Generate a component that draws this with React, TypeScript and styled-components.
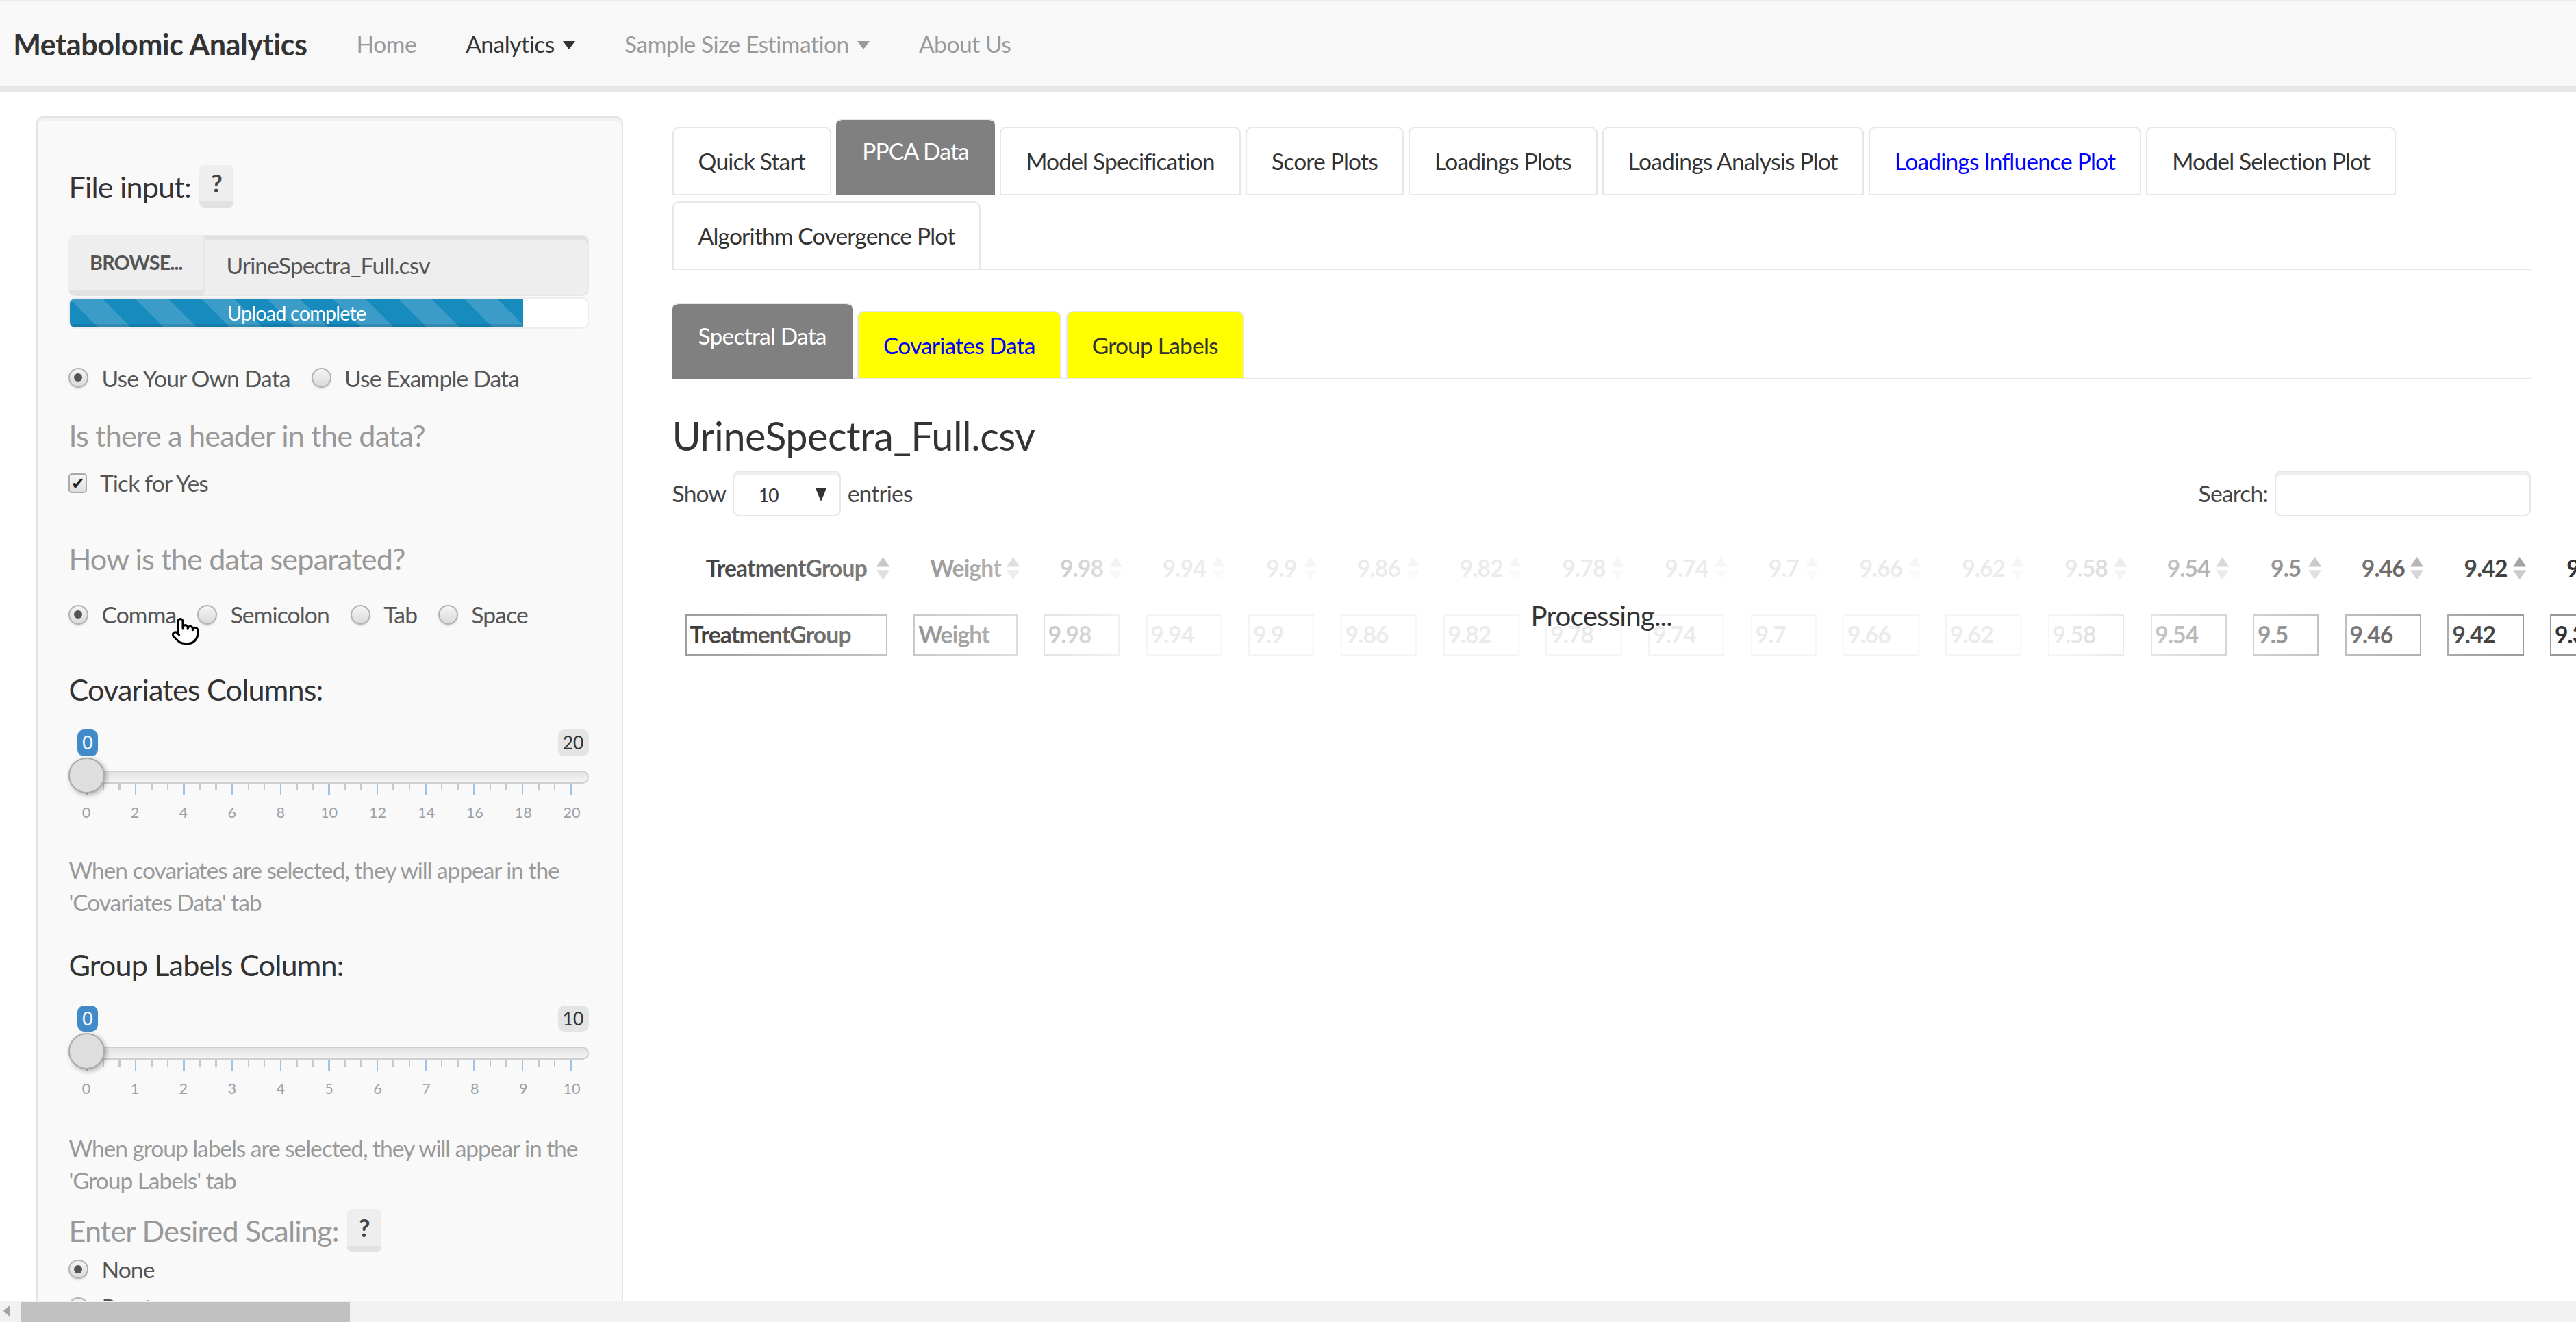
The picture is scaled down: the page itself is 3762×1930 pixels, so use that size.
import React from "react";
import styled, { createGlobalStyle, css } from "styled-components";
import { Pointer } from "lucide-react";

const FONT = `"Source Sans Pro", Lato, "Open Sans", sans-serif`;

const Global = createGlobalStyle`
  html { zoom: 2.4; }
  html, body { margin: 0; padding: 0; overflow: hidden; background: #fff; }
  body { font-family: ${FONT}; font-size: 14px; color: #555; letter-spacing: -0.35px; }
  * { box-sizing: border-box; }
`;

/* ---------- Navbar ---------- */
const Navbar = styled.nav`
  height: 56px;
  background: #f8f8f8;
  border-top: 1px solid #ececf0;
  border-bottom: 4px solid #e6e6e6;
  display: flex;
  align-items: center;
  padding-left: 8px;
  letter-spacing: -0.2px;
`;
const Brand = styled.span`
  font-size: 18px;
  font-weight: 700;
  color: #333;
  margin-right: 15px;
`;
const NavLink = styled.span<{ $active?: boolean }>`
  padding: 0 15px;
  font-size: 14px;
  color: ${(p) => (p.$active ? "#333" : "#999")};
  display: inline-flex;
  align-items: center;
  gap: 5px;
`;
const Caret = styled.span`
  width: 0;
  height: 0;
  border-left: 4px solid transparent;
  border-right: 4px solid transparent;
  border-top: 5px solid currentColor;
  margin-top: 2px;
`;

/* ---------- Layout ---------- */
const Body = styled.div`
  display: flex;
  align-items: flex-start;
  gap: 30px;
  padding: 15px 0 0 22px;
`;
const Well = styled.aside`
  flex: none;
  width: 357px;
  min-height: 1000px;
  background: #f9f9f9;
  border: 1px solid #e3e3e3;
  border-radius: 4px;
  box-shadow: inset 0 2px 0 rgba(0, 0, 0, 0.03);
  padding: 28px 20px 20px 19px;
`;
const Main = styled.main`
  flex: none;
  width: 1131px;
  padding-top: 1px;
`;

/* ---------- Sidebar parts ---------- */
const LabelRow = styled.div<{ $mt?: number }>`
  display: flex;
  align-items: center;
  height: 27px;
  margin-top: ${(p) => p.$mt ?? 0}px;
`;
const FieldLabel = styled.div<{ $muted?: boolean; $mt?: number }>`
  font-size: 18px;
  line-height: 26px;
  color: ${(p) => (p.$muted ? "#999" : "#333")};
  margin-top: ${(p) => p.$mt ?? 0}px;
`;
const HelpButton = styled.span`
  display: inline-flex;
  align-items: center;
  justify-content: center;
  width: 21px;
  height: 26px;
  margin-left: 5px;
  background: #eee;
  border-bottom: 4px solid #e2e2e2;
  border-radius: 3px;
  font-weight: 700;
  font-size: 15px;
  color: #444;
`;
const FileGroup = styled.div`
  display: flex;
  height: 37px;
  margin-top: 16px;
`;
const BrowseButton = styled.div`
  width: 82px;
  flex: none;
  display: flex;
  align-items: center;
  justify-content: center;
  background: #eee;
  border-bottom: 4px solid #e2e2e2;
  border-radius: 4px 0 0 4px;
  font-size: 12px;
  font-weight: 700;
  color: #555;
  text-transform: uppercase;
`;
const FileName = styled.div`
  flex: 1;
  display: flex;
  align-items: center;
  padding: 0 13px;
  background: #eee;
  border: 1px solid #e7e7e7;
  border-radius: 0 4px 4px 0;
  box-shadow: inset 0 2px 0 rgba(0, 0, 0, 0.05);
  font-size: 14px;
  color: #555;
`;
const Progress = styled.div`
  display: flex;
  height: 19px;
  margin-top: 1px;
  background: #fff;
  border: 1px solid #eee;
  border-radius: 4px;
  overflow: hidden;
`;
const ProgressFill = styled.div`
  display: flex;
  align-items: center;
  justify-content: center;
  background-color: #178bbd;
  background-image: linear-gradient(
    45deg,
    rgba(255, 255, 255, 0.15) 25%,
    transparent 25%,
    transparent 50%,
    rgba(255, 255, 255, 0.15) 50%,
    rgba(255, 255, 255, 0.15) 75%,
    transparent 75%,
    transparent
  );
  background-size: 40px 40px;
  box-shadow: inset 0 -2px 0 rgba(0, 0, 0, 0.12);
  color: #fff;
  font-size: 12px;
`;
const ChoiceRow = styled.div<{ $mt?: number; $column?: boolean }>`
  position: relative;
  display: flex;
  flex-direction: ${(p) => (p.$column ? "column" : "row")};
  align-items: ${(p) => (p.$column ? "flex-start" : "center")};
  gap: ${(p) => (p.$column ? 3 : 13)}px;
  margin-top: ${(p) => p.$mt ?? 0}px;
`;
const Choice = styled.label`
  display: inline-flex;
  align-items: center;
  gap: 8px;
  height: 20px;
  font-size: 14px;
  color: #555;
`;
const RadioDot = styled.span<{ $checked?: boolean }>`
  position: relative;
  width: 12px;
  height: 12px;
  border-radius: 50%;
  border: 1px solid #b3b3b3;
  background: linear-gradient(#f5f5f5, #dadada);
  box-shadow: 0 1px 1px rgba(0, 0, 0, 0.08);
  ${(p) =>
    p.$checked &&
    css`
      &::after {
        content: "";
        position: absolute;
        left: 2.5px;
        top: 2.5px;
        width: 5px;
        height: 5px;
        border-radius: 50%;
        background: #555;
      }
    `}
`;
const CheckBox = styled.span`
  display: inline-flex;
  align-items: center;
  justify-content: center;
  width: 11px;
  height: 12px;
  border: 1px solid #aaa;
  border-radius: 2px;
  background: linear-gradient(#f7f7f7, #dedede);
  color: #222;
  font-size: 10px;
  line-height: 1;
`;
const HelpText = styled.p<{ $mt?: number }>`
  margin: ${(p) => p.$mt ?? 0}px 0 0;
  font-size: 14px;
  line-height: 19.3px;
  color: #999;
  letter-spacing: -0.45px;
`;
const CursorMark = styled.span`
  position: absolute;
  left: 62px;
  top: 11px;
  display: flex;
  pointer-events: none;
`;

/* ---------- Slider ---------- */
const SliderBox = styled.div<{ $mt?: number }>`
  margin-top: ${(p) => p.$mt ?? 0}px;
  letter-spacing: 0;
`;
const BadgeRow = styled.div`
  display: flex;
  justify-content: space-between;
  padding-left: 5.3px;
  height: 16px;
`;
const ValueBadge = styled.span<{ $primary?: boolean }>`
  height: 16px;
  padding: 0 3px;
  border-radius: 4px;
  font-size: 11px;
  line-height: 16px;
  background: ${(p) => (p.$primary ? "#428bca" : "#e4e4e4")};
  color: ${(p) => (p.$primary ? "#fff" : "#333")};
`;
const Track = styled.div`
  position: relative;
  height: 8px;
  margin-top: 9px;
  border: 1px solid #cfcfcf;
  border-radius: 4px;
  background: linear-gradient(#e2e2e2, #f5f5f5);
`;
const Handle = styled.span`
  position: absolute;
  left: -1px;
  top: -9px;
  width: 22px;
  height: 22px;
  border-radius: 50%;
  border: 1px solid #aaa;
  background: #dedede;
  box-shadow: 1px 1px 3px rgba(0, 0, 0, 0.3);
`;
const TickRow = styled.div`
  display: flex;
  justify-content: space-between;
  align-items: flex-start;
  height: 7px;
  margin: 0 10.2px 0 10.7px;
`;
const Tick = styled.span<{ $major?: boolean }>`
  width: 1px;
  height: ${(p) => (p.$major ? 7 : 4)}px;
  background: ${(p) => (p.$major ? "#9fc3e6" : "#c8c8c8")};
`;
const TickLabels = styled.div`
  display: flex;
  justify-content: space-between;
  height: 11px;
  margin: 5px 10.2px 0 10.7px;
`;
const TickLabel = styled.span`
  width: 0;
  display: flex;
  justify-content: center;
  font-size: 9px;
  line-height: 11px;
  color: #9aa1a9;
  white-space: nowrap;
`;

function RangeSlider({ max, mt }: { max: number; mt: number }) {
  const labels = Array.from({ length: 11 }, (_, i) => (max / 10) * i);
  const ticks = Array.from({ length: 31 }, (_, i) => i % 3 === 0);
  return (
    <SliderBox $mt={mt}>
      <BadgeRow>
        <ValueBadge $primary>0</ValueBadge>
        <ValueBadge>{max}</ValueBadge>
      </BadgeRow>
      <Track>
        <Handle />
      </Track>
      <TickRow>
        {ticks.map((major, i) => (
          <Tick key={i} $major={major} />
        ))}
      </TickRow>
      <TickLabels>
        {labels.map((l) => (
          <TickLabel key={l}>{l}</TickLabel>
        ))}
      </TickLabels>
    </SliderBox>
  );
}

/* ---------- Tabs ---------- */
const TabList = styled.ul<{ $mt?: number }>`
  display: flex;
  flex-wrap: wrap;
  align-items: flex-start;
  list-style: none;
  margin: ${(p) => p.$mt ?? 0}px 0 0;
  padding: 0;
  border-bottom: 1px solid #e7e7e7;
`;
const TabItem = styled.li<{ $active?: boolean; $bg?: string; $color?: string }>`
  margin: ${(p) => (p.$active ? 0 : 5)}px 3px -1px 0;
  padding: ${(p) => (p.$active ? "9px 15px 16px" : "10px 15px")};
  line-height: 20px;
  font-size: 14px;
  border: 1px solid ${(p) => (p.$active ? "#808080" : "#e7e7e7")};
  border-top-color: #e7e7e7;
  border-radius: 4px 4px 0 0;
  background: ${(p) => (p.$active ? "#808080" : p.$bg ?? "#fff")};
  color: ${(p) => (p.$active ? "#fff" : p.$color ?? "#333")};
  white-space: nowrap;
`;

/* ---------- Data table ---------- */
const FileTitle = styled.h3`
  margin: 21px 0 0;
  font-size: 24px;
  line-height: 26.4px;
  font-weight: 400;
  color: #333;
  letter-spacing: -0.2px;
`;
const ControlsRow = styled.div`
  display: flex;
  justify-content: space-between;
  align-items: center;
  height: 28px;
  margin-top: 8px;
  font-size: 14px;
  color: #444;
`;
const Inline = styled.div`
  display: flex;
  align-items: center;
  gap: 4px;
`;
const LengthSelect = styled.div`
  display: flex;
  align-items: center;
  justify-content: space-between;
  width: 66px;
  height: 28px;
  padding: 2px 8px 0 15px;
  border: 1px solid #e7e7e7;
  border-radius: 4px;
  box-shadow: inset 0 2px 0 rgba(0, 0, 0, 0.06);
  font-size: 11px;
  color: #333;
`;
const SelectArrow = styled.span`
  width: 0;
  height: 0;
  border-left: 3.5px solid transparent;
  border-right: 3.5px solid transparent;
  border-top: 8px solid #333;
`;
const SearchBox = styled.div`
  width: 156px;
  height: 28px;
  border: 1px solid #e7e7e7;
  border-radius: 4px;
  box-shadow: inset 0 2px 0 rgba(0, 0, 0, 0.06);
`;
const TableWrap = styled.div`
  position: relative;
  margin-top: 13.5px;
`;
const DataTable = styled.table`
  border-collapse: collapse;
  table-layout: fixed;
  width: max-content;
`;
const HeadCell = styled.th`
  position: relative;
  height: 36px;
  padding: 8px 0;
  font-size: 14px;
  line-height: 20px;
  font-weight: 700;
  color: #333;
  text-align: center;
`;
const SortIcon = styled.svg`
  position: absolute;
  right: 6.5px;
  top: 11px;
`;
const FilterCell = styled.td`
  padding: 10px 8px 8px;
`;
const FilterBox = styled.div`
  height: 25px;
  padding-left: 2px;
  border: 1px solid #9a9a9a;
  font-size: 14px;
  line-height: 23px;
  font-weight: 700;
  color: #333;
  white-space: nowrap;
  overflow: hidden;
`;
const Processing = styled.div`
  position: absolute;
  inset: 0;
  display: flex;
  align-items: center;
  justify-content: center;
  padding-top: 15px;
  font-size: 16.8px;
  color: #333;
  background: linear-gradient(
    to right,
    rgba(255, 255, 255, 0) 0%,
    rgba(255, 255, 255, 0.9) 25%,
    rgba(255, 255, 255, 0.9) 75%,
    rgba(255, 255, 255, 0) 100%
  );
`;

/* ---------- Fake horizontal scrollbar ---------- */
const HScrollbar = styled.div`
  position: fixed;
  left: 0;
  right: 0;
  bottom: 0;
  height: 13px;
  display: flex;
  align-items: center;
  background: #f1f1f1;
`;
const ScrollArrow = styled.span`
  width: 0;
  height: 0;
  margin: 0 7px 0 2px;
  border-top: 3.5px solid transparent;
  border-bottom: 3.5px solid transparent;
  border-right: 4px solid #a3a3a3;
`;
const ScrollThumb = styled.span`
  width: 200px;
  height: 12px;
  margin-top: 1px;
  background: #c1c1c1;
`;

const mainTabs: { label: string; active?: boolean; color?: string }[] = [
  { label: "Quick Start" },
  { label: "PPCA Data", active: true },
  { label: "Model Specification" },
  { label: "Score Plots" },
  { label: "Loadings Plots" },
  { label: "Loadings Analysis Plot" },
  { label: "Loadings Influence Plot", color: "#0000ff" },
  { label: "Model Selection Plot" },
  { label: "Algorithm Covergence Plot" },
];

const dataTabs: { label: string; active?: boolean; color?: string; bg?: string }[] = [
  { label: "Spectral Data", active: true },
  { label: "Covariates Data", bg: "#ffff00", color: "#0000ff" },
  { label: "Group Labels", bg: "#ffff00" },
];

const numericCols = [
  "9.98", "9.94", "9.9", "9.86", "9.82", "9.78", "9.74", "9.7", "9.66", "9.62",
  "9.58", "9.54", "9.5", "9.46", "9.42", "9.38", "9.34", "9.3",
];
const columns = [
  { name: "TreatmentGroup", w: 139 },
  { name: "Weight", w: 79 },
  ...numericCols.map((n) => ({ name: n, w: n.length === 3 ? 56 : 62.4 })),
];

function Sort() {
  return (
    <SortIcon width="8" height="14" viewBox="0 0 8 14">
      <polygon points="4,0 8,6 0,6" fill="#a2a2a2" />
      <polygon points="0,8 8,8 4,14" fill="#cacaca" />
    </SortIcon>
  );
}

export default function App() {
  return (
    <>
      <Global />
      <Navbar>
        <Brand>Metabolomic Analytics</Brand>
        <NavLink>Home</NavLink>
        <NavLink $active>
          Analytics <Caret />
        </NavLink>
        <NavLink>
          Sample Size Estimation <Caret />
        </NavLink>
        <NavLink>About Us</NavLink>
      </Navbar>

      <Body>
        <Well>
          <LabelRow>
            <FieldLabel>File input:</FieldLabel>
            <HelpButton>?</HelpButton>
          </LabelRow>
          <FileGroup>
            <BrowseButton>Browse...</BrowseButton>
            <FileName>UrineSpectra_Full.csv</FileName>
          </FileGroup>
          <Progress>
            <ProgressFill style={{ width: "87.6%" }}>Upload complete</ProgressFill>
          </Progress>

          <ChoiceRow $mt={20}>
            <Choice>
              <RadioDot $checked />
              Use Your Own Data
            </Choice>
            <Choice>
              <RadioDot />
              Use Example Data
            </Choice>
          </ChoiceRow>

          <FieldLabel $muted $mt={12}>
            Is there a header in the data?
          </FieldLabel>
          <ChoiceRow $mt={6}>
            <Choice>
              <CheckBox>✔</CheckBox>
              Tick for Yes
            </Choice>
          </ChoiceRow>

          <FieldLabel $muted $mt={23}>
            How is the data separated?
          </FieldLabel>
          <ChoiceRow $mt={11}>
            <Choice>
              <RadioDot $checked />
              Comma
            </Choice>
            <Choice>
              <RadioDot />
              Semicolon
            </Choice>
            <Choice>
              <RadioDot />
              Tab
            </Choice>
            <Choice>
              <RadioDot />
              Space
            </Choice>
            <CursorMark>
              <Pointer size={18} strokeWidth={1.7} color="#000" fill="#fff" />
            </CursorMark>
          </ChoiceRow>

          <FieldLabel $mt={22.5}>Covariates Columns:</FieldLabel>
          <RangeSlider max={20} mt={11.5} />
          <HelpText $mt={20}>
            When covariates are selected, they will appear in the 'Covariates Data' tab
          </HelpText>

          <FieldLabel $mt={15.5}>Group Labels Column:</FieldLabel>
          <RangeSlider max={10} mt={11.8} />
          <HelpText $mt={21.3}>
            When group labels are selected, they will appear in the 'Group Labels' tab
          </HelpText>

          <LabelRow $mt={7.5}>
            <FieldLabel $muted>Enter Desired Scaling:</FieldLabel>
            <HelpButton>?</HelpButton>
          </LabelRow>
          <ChoiceRow $column $mt={0}>
            <Choice>
              <RadioDot $checked />
              None
            </Choice>
            <Choice>
              <RadioDot />
              Pareto
            </Choice>
          </ChoiceRow>
        </Well>

        <Main>
          <TabList>
            {mainTabs.map((t) => (
              <TabItem key={t.label} $active={t.active} $color={t.color}>
                {t.label}
              </TabItem>
            ))}
          </TabList>

          <TabList $mt={20}>
            {dataTabs.map((t) => (
              <TabItem key={t.label} $active={t.active} $color={t.color} $bg={t.bg}>
                {t.label}
              </TabItem>
            ))}
          </TabList>

          <FileTitle>UrineSpectra_Full.csv</FileTitle>

          <ControlsRow>
            <Inline>
              Show
              <LengthSelect>
                10
                <SelectArrow />
              </LengthSelect>
              entries
            </Inline>
            <Inline>
              Search:
              <SearchBox />
            </Inline>
          </ControlsRow>

          <TableWrap>
            <DataTable>
              <colgroup>
                {columns.map((c) => (
                  <col key={c.name} style={{ width: c.w }} />
                ))}
              </colgroup>
              <thead>
                <tr>
                  {columns.map((c) => (
                    <HeadCell key={c.name}>
                      {c.name}
                      <Sort />
                    </HeadCell>
                  ))}
                </tr>
                <tr>
                  {columns.map((c) => (
                    <FilterCell key={c.name}>
                      <FilterBox>{c.name}</FilterBox>
                    </FilterCell>
                  ))}
                </tr>
              </thead>
            </DataTable>
            <Processing>Processing...</Processing>
          </TableWrap>
        </Main>
      </Body>

      <HScrollbar>
        <ScrollArrow />
        <ScrollThumb />
      </HScrollbar>
    </>
  );
}
